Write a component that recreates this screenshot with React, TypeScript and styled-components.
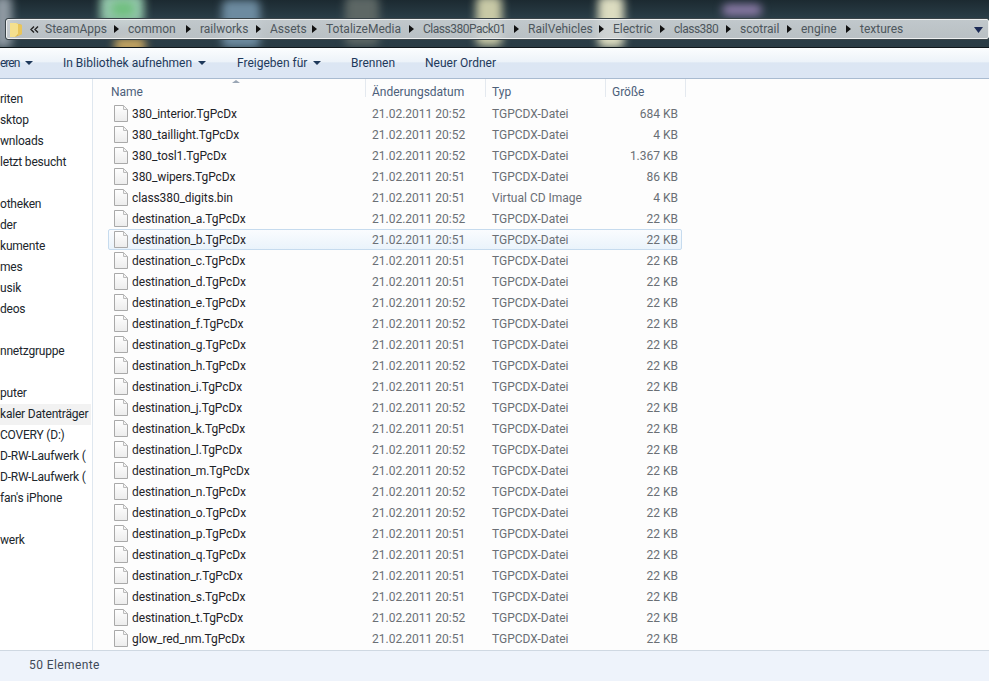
import React from "react";
import styled, { createGlobalStyle } from "styled-components";

const Global = createGlobalStyle`
  html, body { margin: 0; padding: 0; background: #fff; }
  body { font-family: Roboto, "Noto Sans", sans-serif; font-size: 12px; }
`;

const Page = styled.div`
  width: 989px; height: 681px; overflow: hidden;
  display: flex; flex-direction: column; background: #fff;
`;
const GlassBand = styled.div`
  height: 48px; flex: none; box-sizing: border-box; padding: 19px 0 0 6px;
  border-bottom: 1px solid #10181c; position: relative; overflow: hidden;
  background: linear-gradient(#1c2a31, #2c414b 45%, #2a3c45);
`;
/* blurred desktop icons seen through the window glass */
const DesktopBlur = styled.div<{ $x: number; $y: number; $w: number; $h: number; $c: string }>`
  position: absolute; left: ${p => p.$x}px; top: ${p => p.$y}px;
  width: ${p => p.$w}px; height: ${p => p.$h}px;
  background: ${p => p.$c}; filter: blur(4px); border-radius: 6px;
`;
const AddressBar = styled.div`
  height: 20px; box-sizing: border-box; display: flex; align-items: center;
  border: 1px solid #eef0f0; outline: 1px solid #3a4449;
  border-radius: 2px; color: #4d565c; position: relative;
  background: linear-gradient(rgba(205,211,214,.92), rgba(205,210,213,.88));
  padding-left: 2px;
`;
const Chevrons = styled.svg`
  width: 9px; height: 7px; margin: 0 6px 0 7px; flex: none;
`;
const Crumb = styled.span<{ $w: number; $tight?: boolean }>`
  white-space: nowrap; width: ${p => p.$w}px; flex: none;
  letter-spacing: ${p => (p.$tight ? "-0.5px" : "0")};
`;
const Sep = styled.svg`
  width: 5px; height: 8px; margin: 0 9px; flex: none;
`;
const DropArrow = styled.svg`
  width: 9px; height: 6px; position: absolute; right: 5px; top: 7px;
`;
const Toolbar = styled.div`
  height: 31px; flex: none; box-sizing: border-box; display: flex; align-items: center;
  color: #1e395b; border-bottom: 1px solid #a9bbd0;
  background: linear-gradient(#fbfdfe 0%, #edf3f9 45%, #dce6f3 50%, #dce6f4 100%);
`;
const ToolItem = styled.span<{ $w: number; $tight?: boolean }>`
  width: ${p => p.$w}px; flex: none; white-space: nowrap; display: flex; align-items: center; gap: 6px;
  letter-spacing: ${p => (p.$tight ? "-1px" : "0")};
`;
const Caret = styled.i`
  display: block; width: 0; height: 0;
  border-left: 4px solid transparent; border-right: 4px solid transparent; border-top: 4px solid #1e395b;
`;
const Body = styled.div`
  flex: 1; display: flex; min-height: 0;
`;
const Sidebar = styled.div`
  width: 93px; flex: none; box-sizing: border-box; padding-top: 10px; overflow: hidden;
  border-right: 1px solid #dfe7ef; background: #fff; color: #20262c; letter-spacing: -0.2px;
`;
const NavRow = styled.div<{ $active?: boolean }>`
  height: 21px; line-height: 21px; white-space: nowrap; overflow: hidden;
  background: ${p => (p.$active ? "#f2f2f2" : "transparent")};
  margin-right: 1px;
`;
const Main = styled.div`
  flex: 1; min-width: 0; background: #fdfdfd; position: relative; box-sizing: border-box; padding-left: 15px;
`;
const SortMark = styled.i`
  position: absolute; left: 139px; top: 1px; width: 0; height: 0;
  border-left: 4px solid transparent; border-right: 4px solid transparent; border-bottom: 3px solid #9aa6b5;
`;
const HeadRow = styled.div`
  height: 24px; display: grid; grid-template-columns: 258px 120px 120px 80px; color: #4c607a; width: 578px;
`;
const HeadCell = styled.div`
  box-sizing: border-box; padding: 6px 0 0 6px; height: 18px; line-height: 15px;
  border-right: 1px solid #e4e9ef; white-space: nowrap;
`;
const NameHead = styled(HeadCell)`
  padding-left: 3px;
`;
const FileRow = styled.div<{ $selected?: boolean }>`
  height: 21px; box-sizing: border-box; width: 574px; display: grid;
  grid-template-columns: 256px 120px 120px 73px; align-items: center; color: #6a6f75;
  border: 1px solid ${p => (p.$selected ? "#c6dbee" : "transparent")};
  border-radius: 2px;
  background: ${p => (p.$selected ? "linear-gradient(#fafcfe, #eaf3fb)" : "transparent")};
`;
const NameCell = styled.div`
  display: flex; align-items: center; color: #1f2328; white-space: nowrap; padding-left: 5px; letter-spacing: -0.1px;
`;
const FileIcon = styled.svg`
  width: 14px; height: 17px; flex: none; margin-right: 4px;
`;
const Cell = styled.div`
  white-space: nowrap; padding-left: 7px;
`;
const SizeCell = styled.div`
  text-align: right; white-space: nowrap;
`;
const Status = styled.div`
  height: 31px; flex: none; box-sizing: border-box; padding: 6px 0 0 29px; line-height: 16px;
  background: #eef3fb; border-top: 1px solid #cfd8e2; color: #3f4a58; letter-spacing: 0.4px;
`;

const nav: [string, boolean?][] = [
  ["riten"], ["sktop"], ["wnloads"], ["letzt besucht"], [""], ["otheken"], ["der"], ["kumente"], ["mes"],
  ["usik"], ["deos"], [""], ["nnetzgruppe"], [""], ["puter"], ["kaler Datenträger", true], ["COVERY (D:)"],
  ["D-RW-Laufwerk ("], ["D-RW-Laufwerk ("], ["fan's iPhone"], [""], ["werk"],
];

const T = "TGPCDX-Datei";
const files: [string, string, string, string][] = [
  ["380_interior.TgPcDx", "20:52", T, "684 KB"],
  ["380_taillight.TgPcDx", "20:52", T, "4 KB"],
  ["380_tosl1.TgPcDx", "20:52", T, "1.367 KB"],
  ["380_wipers.TgPcDx", "20:51", T, "86 KB"],
  ["class380_digits.bin", "20:51", "Virtual CD Image", "4 KB"],
  ["destination_a.TgPcDx", "20:52", T, "22 KB"],
  ["destination_b.TgPcDx", "20:51", T, "22 KB"],
  ["destination_c.TgPcDx", "20:51", T, "22 KB"],
  ["destination_d.TgPcDx", "20:51", T, "22 KB"],
  ["destination_e.TgPcDx", "20:52", T, "22 KB"],
  ["destination_f.TgPcDx", "20:52", T, "22 KB"],
  ["destination_g.TgPcDx", "20:51", T, "22 KB"],
  ["destination_h.TgPcDx", "20:52", T, "22 KB"],
  ["destination_i.TgPcDx", "20:51", T, "22 KB"],
  ["destination_j.TgPcDx", "20:52", T, "22 KB"],
  ["destination_k.TgPcDx", "20:51", T, "22 KB"],
  ["destination_l.TgPcDx", "20:52", T, "22 KB"],
  ["destination_m.TgPcDx", "20:52", T, "22 KB"],
  ["destination_n.TgPcDx", "20:52", T, "22 KB"],
  ["destination_o.TgPcDx", "20:52", T, "22 KB"],
  ["destination_p.TgPcDx", "20:51", T, "22 KB"],
  ["destination_q.TgPcDx", "20:51", T, "22 KB"],
  ["destination_r.TgPcDx", "20:51", T, "22 KB"],
  ["destination_s.TgPcDx", "20:51", T, "22 KB"],
  ["destination_t.TgPcDx", "20:52", T, "22 KB"],
  ["glow_red_nm.TgPcDx", "20:51", T, "22 KB"],
];

const crumbs: [string, number, boolean?][] = [
  ["SteamApps", 60], ["common", 49], ["railworks", 47], ["Assets", 33], ["TotalizeMedia", 74],
  ["Class380Pack01", 82, true], ["RailVehicles", 62], ["Electric", 38], ["class380", 43, true],
  ["scotrail", 38], ["engine", 36], ["textures", 42],
];

const blurs: [number, number, number, number, string][] = [
  [-6, -4, 18, 52, "#8f9aa3"],
  [100, -6, 44, 30, "#93c6ab"],
  [112, 2, 22, 14, "#6fbf7d"],
  [114, 38, 32, 14, "#c9a862"],
  [222, 0, 38, 48, "#6d8ba0"],
  [345, -4, 34, 50, "#5d6765"],
  [476, -4, 26, 50, "#c8c9a6"],
  [598, -4, 26, 52, "#dcdcc0"],
  [722, 4, 40, 12, "#8a7aa6"],
];

const Doc = () => (
  <FileIcon viewBox="0 0 14 17">
    <defs>
      <linearGradient id="pg" x1="0" y1="0" x2="0" y2="1">
        <stop offset="0" stopColor="#ffffff" />
        <stop offset="1" stopColor="#ececec" />
      </linearGradient>
    </defs>
    <path d="M.5.5h9l4 4v12H.5z" fill="url(#pg)" stroke="#a9a9a9" />
    <path d="M9.5.5v4h4z" fill="#f4f4f4" stroke="#bcbcbc" />
  </FileIcon>
);

const Folder = () => (
  <svg width="14" height="15" viewBox="0 0 14 15" style={{ flex: "none" }}>
    <path d="M1 1h5l7 2v9l-7 3H1z" fill="#dcb545" />
    <path d="M1 1h6l2 1v10l-3 3H1z" fill="#f4e08e" />
    <path d="M9 2l4 1v9l-4 2z" fill="#e9c65b" />
  </svg>
);

export default function App() {
  return (
    <Page>
      <Global />
      <GlassBand>
        {blurs.map(([x, y, w, h, c], i) => (
          <DesktopBlur key={i} $x={x} $y={y} $w={w} $h={h} $c={c} />
        ))}
        <AddressBar>
          <Folder />
          <Chevrons viewBox="0 0 9 7">
            <path d="M4 .5L1 3.5 4 6.5M8 .5L5 3.5 8 6.5" fill="none" stroke="#222" strokeWidth="1.4" />
          </Chevrons>
          {crumbs.map(([c, w, tight], i) => (
            <React.Fragment key={c}>
              <Crumb $w={w} $tight={tight}>{c}</Crumb>
              {i < crumbs.length - 1 && (
                <Sep viewBox="0 0 5 8"><path d="M0 0l5 4-5 4z" fill="#111" /></Sep>
              )}
            </React.Fragment>
          ))}
          <DropArrow viewBox="0 0 9 6"><path d="M0 0h9L4.5 6z" fill="#1b2a55" /></DropArrow>
        </AddressBar>
      </GlassBand>
      <Toolbar>
        <ToolItem $w={63} $tight>eren <Caret /></ToolItem>
        <ToolItem $w={174}>In Bibliothek aufnehmen <Caret /></ToolItem>
        <ToolItem $w={114}>Freigeben für <Caret /></ToolItem>
        <ToolItem $w={74}>Brennen</ToolItem>
        <ToolItem $w={90}>Neuer Ordner</ToolItem>
      </Toolbar>
      <Body>
        <Sidebar>
          {nav.map(([t, a], i) => (
            <NavRow key={i} $active={a}>{t}</NavRow>
          ))}
        </Sidebar>
        <Main>
          <SortMark />
          <HeadRow>
            <NameHead>Name</NameHead>
            <HeadCell>Änderungsdatum</HeadCell>
            <HeadCell>Typ</HeadCell>
            <HeadCell>Größe</HeadCell>
          </HeadRow>
          {files.map(([n, t, ty, s], i) => (
            <FileRow key={n} $selected={i === 6}>
              <NameCell><Doc />{n}</NameCell>
              <Cell>21.02.2011 {t}</Cell>
              <Cell>{ty}</Cell>
              <SizeCell>{s}</SizeCell>
            </FileRow>
          ))}
        </Main>
      </Body>
      <Status>50 Elemente</Status>
    </Page>
  );
}
